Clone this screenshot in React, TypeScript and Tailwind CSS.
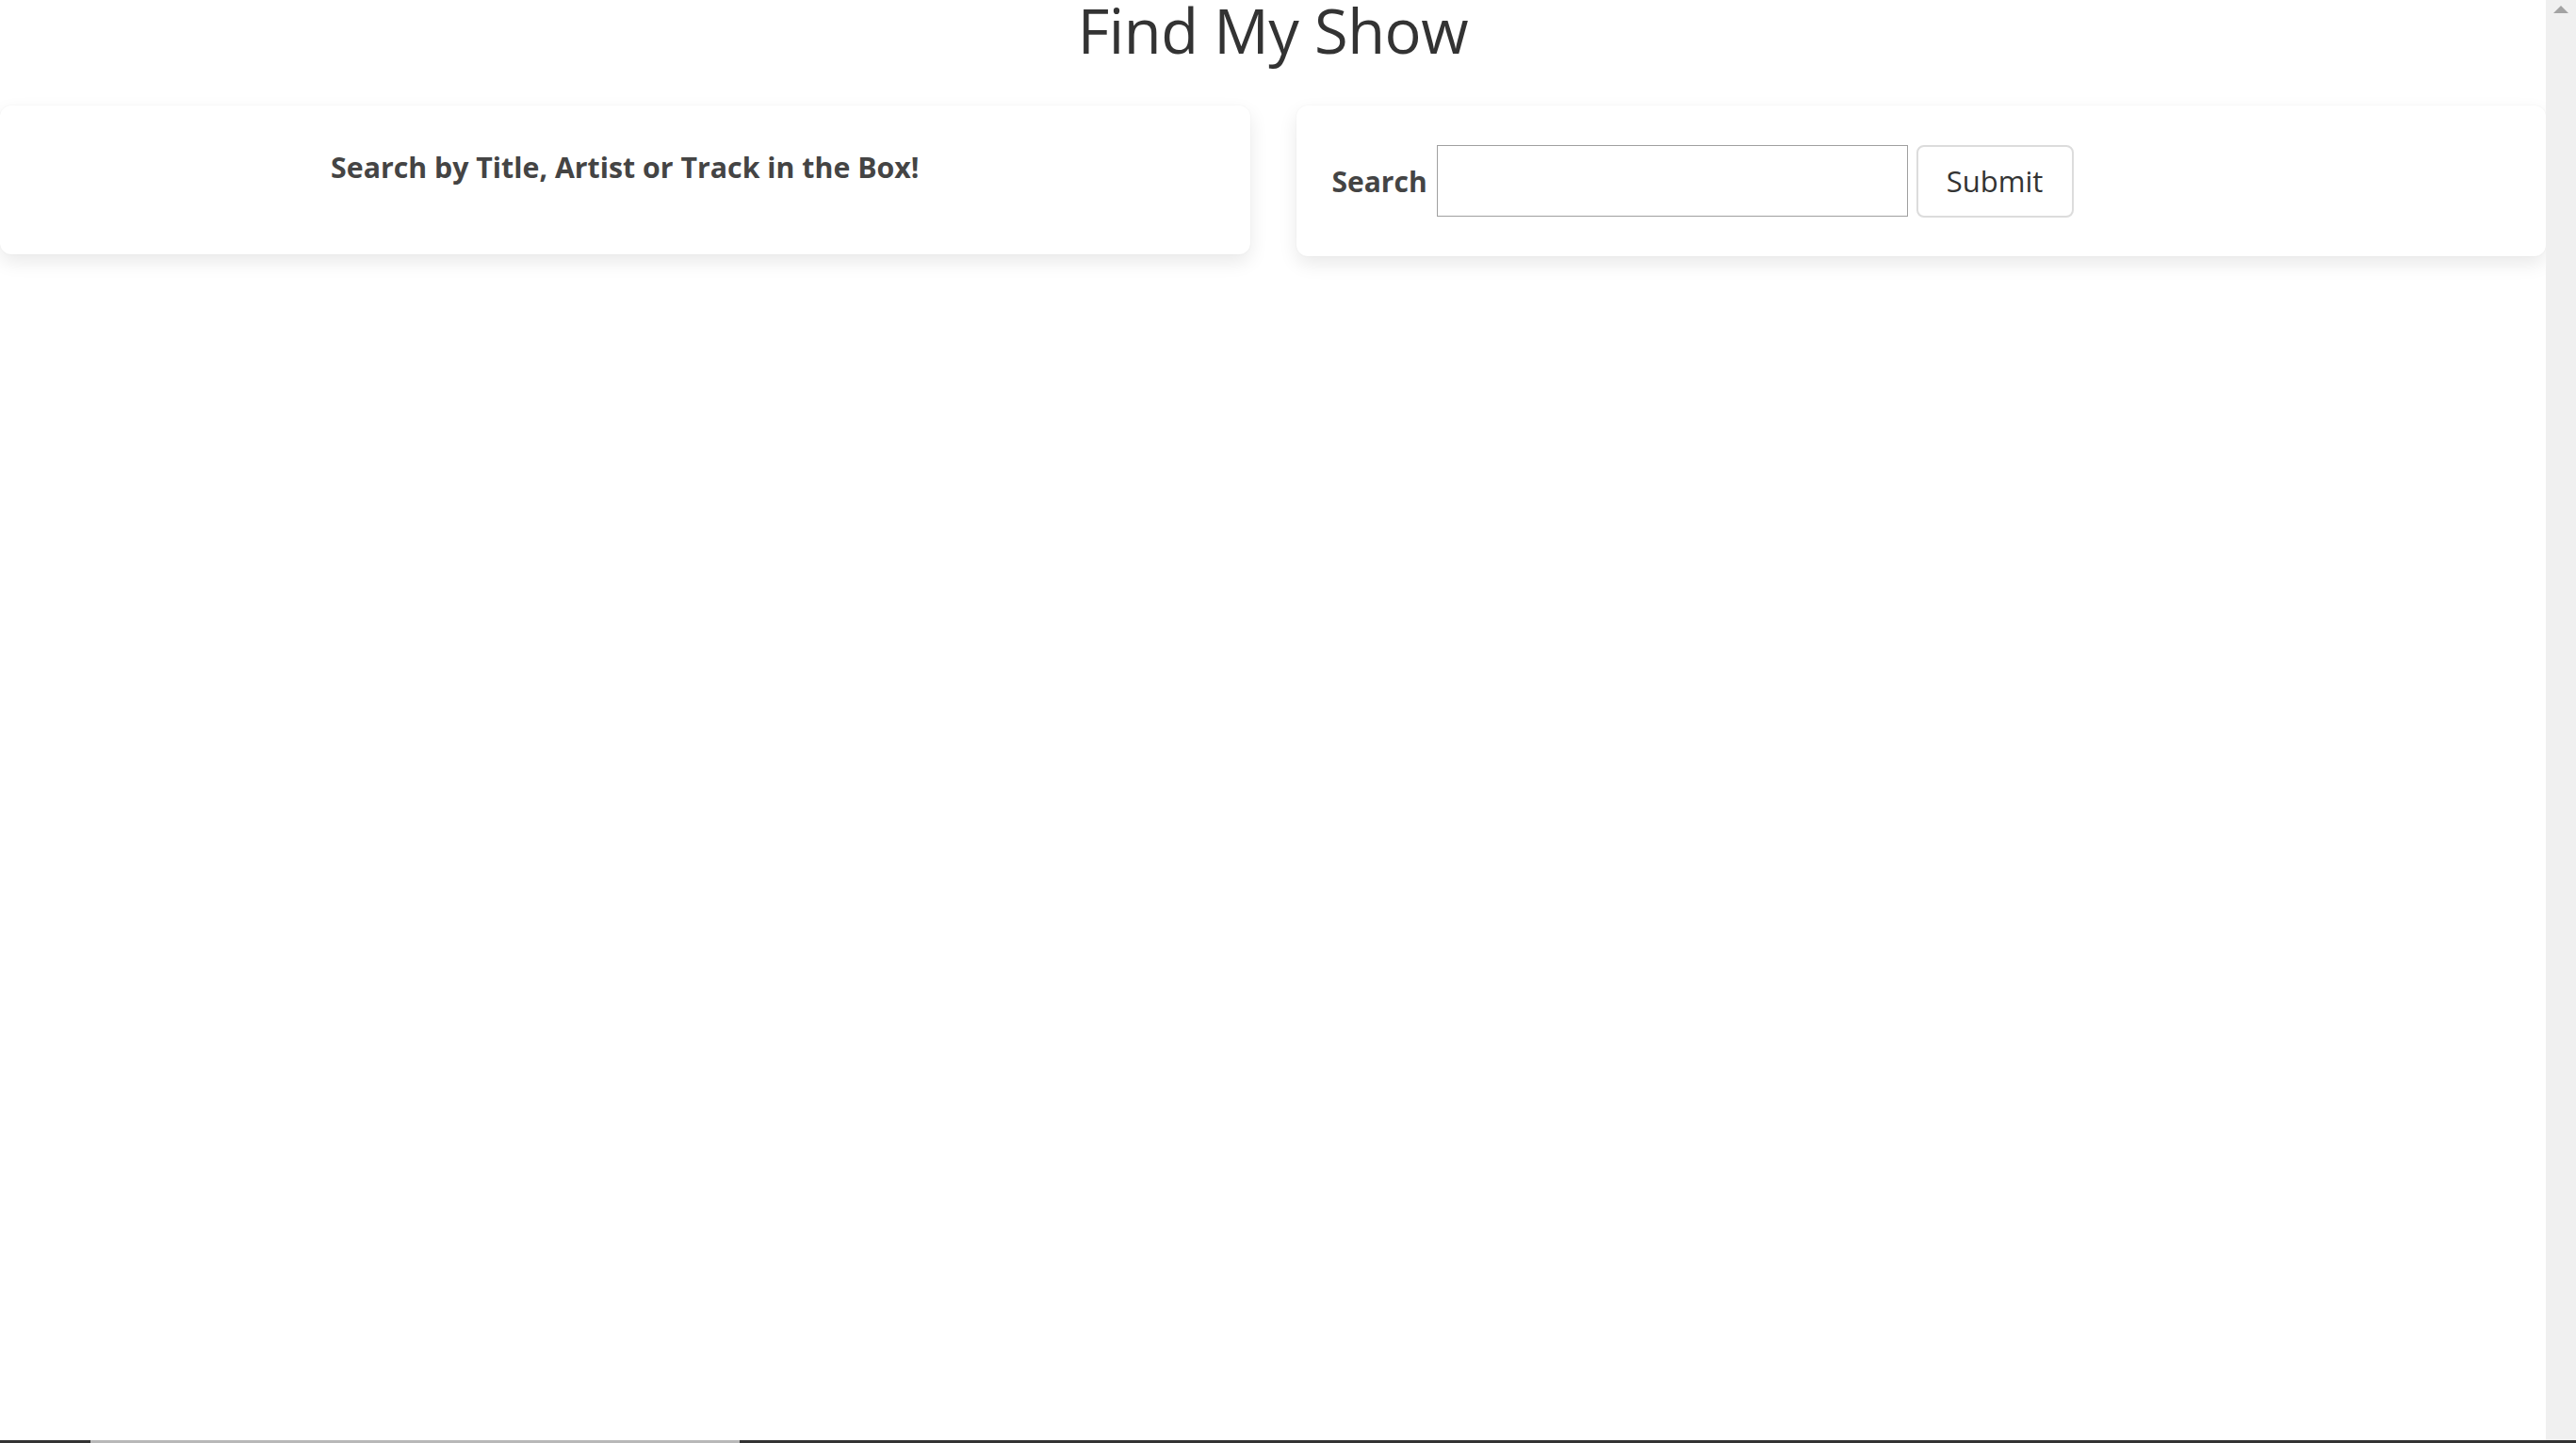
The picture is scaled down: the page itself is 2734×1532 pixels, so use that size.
export default function App() {
  return (
    <div className="flex h-screen flex-col overflow-hidden bg-white font-['Open_Sans','Noto_Sans',sans-serif] text-[#333]">
      <div className="flex min-h-0 flex-1">
        <main className="min-w-0 flex-1">
          <h1 className="mt-[-14px] text-center text-[65px] leading-[92px] font-normal tracking-[-0.4px] text-[#333]">Find My Show</h1>
          <div className="mt-[34px] grid grid-cols-2 gap-[49px]">
            <div className="h-[158px] rounded-[12px] bg-white pt-[45px] text-center shadow-[0_8px_20px_rgba(0,0,0,0.09),0_0_2px_rgba(0,0,0,0.05)]">
              <h5 className="text-[30.3px] leading-[42px] font-bold text-[#444]">Search by Title, Artist or Track in the Box!</h5>
            </div>
            <div className="flex h-[160px] items-center rounded-[12px] bg-white px-[38px] shadow-[0_8px_20px_rgba(0,0,0,0.09),0_0_2px_rgba(0,0,0,0.05)]">
              <label className="text-[30px] font-bold text-[#444]">Search</label>
              <input type="text" className="ml-[10px] h-[76px] w-[500px] border border-[#a0a0a0] bg-white px-2 text-[30px] outline-none" />
              <button className="ml-[9px] h-[77px] w-[167px] rounded-[8px] border-2 border-[#dcdcdc] bg-white text-[31px] text-[#333]">Submit</button>
            </div>
          </div>
        </main>
        <div className="flex w-[32px] flex-col items-center bg-[#f0f0f0] pt-[6px]">
          <svg width="16" height="9" viewBox="0 0 16 9">
            <path d="M8 0 L16 8 L0 8 Z" fill="#a3a3a3" />
          </svg>
        </div>
      </div>
      <div className="flex h-[3px] bg-[#333]">
        <div className="ml-[96px] w-[689px] bg-[#b8b8b8]" />
      </div>
    </div>
  );
}
